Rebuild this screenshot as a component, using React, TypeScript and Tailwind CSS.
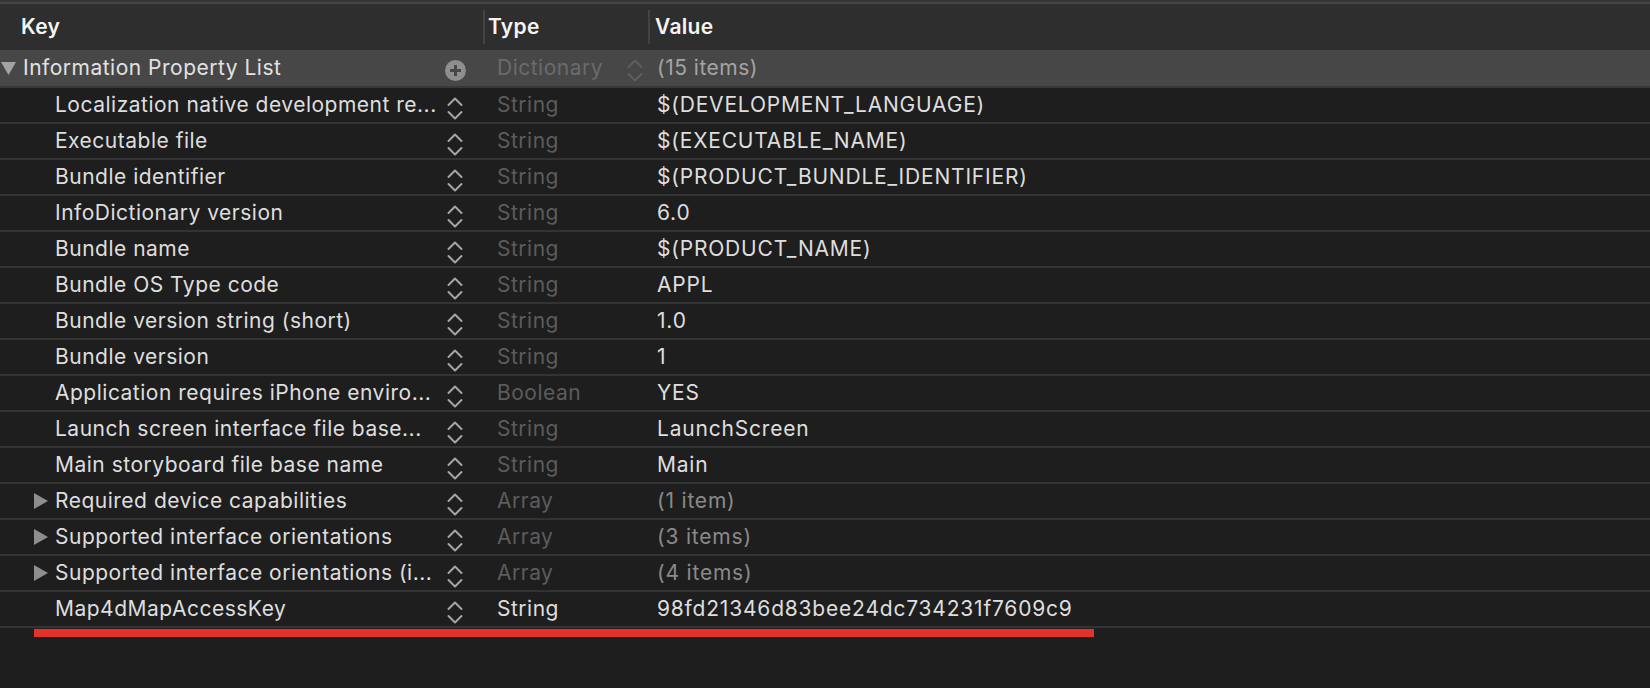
import React from 'react';

type Row = {
  key: string;
  type: string;
  value: string;
  array?: boolean;
  active?: boolean;
};

const rows: Row[] = [
  { key: 'Localization native development re...', type: 'String', value: '$(DEVELOPMENT_LANGUAGE)' },
  { key: 'Executable file', type: 'String', value: '$(EXECUTABLE_NAME)' },
  { key: 'Bundle identifier', type: 'String', value: '$(PRODUCT_BUNDLE_IDENTIFIER)' },
  { key: 'InfoDictionary version', type: 'String', value: '6.0' },
  { key: 'Bundle name', type: 'String', value: '$(PRODUCT_NAME)' },
  { key: 'Bundle OS Type code', type: 'String', value: 'APPL' },
  { key: 'Bundle version string (short)', type: 'String', value: '1.0' },
  { key: 'Bundle version', type: 'String', value: '1' },
  { key: 'Application requires iPhone enviro...', type: 'Boolean', value: 'YES' },
  { key: 'Launch screen interface file base...', type: 'String', value: 'LaunchScreen' },
  { key: 'Main storyboard file base name', type: 'String', value: 'Main' },
  { key: 'Required device capabilities', type: 'Array', value: '(1 item)', array: true },
  { key: 'Supported interface orientations', type: 'Array', value: '(3 items)', array: true },
  { key: 'Supported interface orientations (i...', type: 'Array', value: '(4 items)', array: true },
  { key: 'Map4dMapAccessKey', type: 'String', value: '98fd21346d83bee24dc734231f7609c9', active: true },
];

const Stepper = ({ color }: { color: string }) => (
  <svg width="16" height="24" viewBox="0 0 16 24" fill="none" stroke={color} strokeWidth="2" strokeLinecap="round" strokeLinejoin="round">
    <path d="M1.5 9 L8 2.5 L14.5 9" />
    <path d="M1.5 16 L8 22.5 L14.5 16" />
  </svg>
);

const App = () => {
  return (
    <div className="w-[1650px] h-[688px] bg-[#1e1e1e] overflow-hidden text-[21px] tracking-[0.5px] font-['Inter',sans-serif] select-none">
      <div className="h-[2px] bg-[#353535]" />
      <div className="h-[2px] bg-[#464646]" />

      {/* column header */}
      <div className="h-[46px] bg-[#2e2e2e] flex items-center font-semibold text-[#f4f4f4] tracking-[0.3px]">
        <div className="w-[483px] pl-[21px]">Key</div>
        <div className="w-[2px] h-[34px] bg-[#434343]" />
        <div className="w-[163px] pl-[3px]">Type</div>
        <div className="w-[2px] h-[34px] bg-[#434343]" />
        <div className="flex-1 pl-[5px]">Value</div>
      </div>

      {/* root dictionary */}
      <div className="h-[38px] bg-[#474747] border-b-2 border-[#383838] flex items-center">
        <div className="w-[440px] flex items-center">
          <svg width="16" height="14" viewBox="0 0 16 14" className="ml-[1px] mt-[1px]">
            <path d="M0 0 H15 L7.5 13 Z" fill="#a3a3a3" />
          </svg>
          <span className="ml-[6px] text-[#e2e2e2]">Information Property List</span>
        </div>
        <div className="w-[30px] flex justify-center mt-[4px]">
          <div className="w-[21px] h-[21px] rounded-full bg-[#8e8e8e] flex items-center justify-center">
            <svg width="11" height="11" viewBox="0 0 11 11">
              <path d="M5.5 0 V11 M0 5.5 H11" stroke="#474747" strokeWidth="3" />
            </svg>
          </div>
        </div>
        <div className="w-[157px] pl-[27px] text-[#6b6b6b]">Dictionary</div>
        <div className="w-[30px] self-start pt-[8px]">
          <Stepper color="#5e5e5e" />
        </div>
        <div className="flex-1 text-[#a4a4a4]">(15 items)</div>
      </div>

      {rows.map((r, i) => (
        <div key={i} className="h-[36px] border-b-2 border-[#333333] flex items-center">
          <div className="w-[440px] flex items-center whitespace-nowrap overflow-hidden">
            <div className="w-[55px] shrink-0 flex justify-end pr-[7px]">
              {r.array && (
                <svg width="14" height="16" viewBox="0 0 14 16">
                  <path d="M0 0 L14 8 L0 16 Z" fill="#8e8e8e" />
                </svg>
              )}
            </div>
            <span className="text-[#dedede]">{r.key}</span>
          </div>
          <div className="w-[30px] self-start pt-[8px] flex justify-center">
            <Stepper color="#a6a6a6" />
          </div>
          <div className={`w-[187px] pl-[27px] ${r.active ? 'text-[#dedede]' : 'text-[#5c5c5c]'}`}>{r.type}</div>
          <div className={`flex-1 whitespace-nowrap tracking-[0.8px] ${r.array ? 'text-[#8a8a8a]' : 'text-[#dedede]'}`}>{r.value}</div>
        </div>
      ))}

      <div className="mt-[1px] ml-[34px] w-[1060px] h-[8px] bg-[#e3322a]" />
    </div>
  );
};

export default App;
